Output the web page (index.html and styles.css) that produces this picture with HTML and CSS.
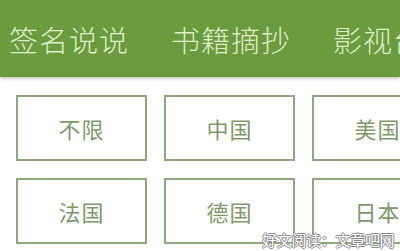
FILE: index.html
```html
<!DOCTYPE html>
<html lang="zh">
<head>
<meta charset="utf-8">
<link rel="stylesheet" href="styles.css">
</head>
<body>
<div class="page">
  <header class="tabs">
    <span class="tab">签名说说</span>
    <span class="tab">书籍摘抄</span>
    <span class="tab">影视台词</span>
  </header>
  <main class="grid">
    <div class="cell">不限</div>
    <div class="cell">中国</div>
    <div class="cell">美国</div>
    <div class="cell">法国</div>
    <div class="cell">德国</div>
    <div class="cell">日本</div>
  </main>
  <div class="watermark">好文阅读：文章吧网</div>
</div>
</body>
</html>
```
FILE: styles.css
```css
html, body {
  margin: 0;
  padding: 0;
  background: #ffffff;
  overflow: hidden;
}
.page {
  position: relative;
  width: 400px;
  height: 251px;
  overflow: hidden;
  font-family: "Noto Sans CJK SC", "Noto Sans", sans-serif;
}
.tabs {
  height: 77px;
  background: #6b9a3f;
  box-shadow: 0 2px 3px rgba(90, 120, 60, 0.35);
  display: flex;
  align-items: center;
  gap: 42px;
  padding-left: 9px;
  white-space: nowrap;
}
.tab {
  color: #dcefc6;
  font-size: 29px;
  font-weight: 300;
  letter-spacing: 1px;
  line-height: 1;
  padding-top: 2px;
}
.grid {
  display: grid;
  grid-template-columns: 131px 131px 131px;
  column-gap: 17px;
  row-gap: 17px;
  padding: 18px 0 0 16px;
}
.cell {
  box-sizing: border-box;
  height: 66px;
  border: 2px solid #8fa97f;
  display: flex;
  align-items: center;
  justify-content: center;
  color: #7c9a6a;
  font-size: 22px;
  letter-spacing: 1px;
}
.watermark {
  position: absolute;
  left: 262px;
  top: 231px;
  font-size: 15px;
  line-height: 18px;
  color: #ffffff;
  letter-spacing: -0.3px;
  white-space: nowrap;
  text-shadow: 1px 0 0 #8a8a8a, -1px 0 0 #8a8a8a, 0 1px 0 #8a8a8a, 0 -1px 0 #8a8a8a;
}
```
